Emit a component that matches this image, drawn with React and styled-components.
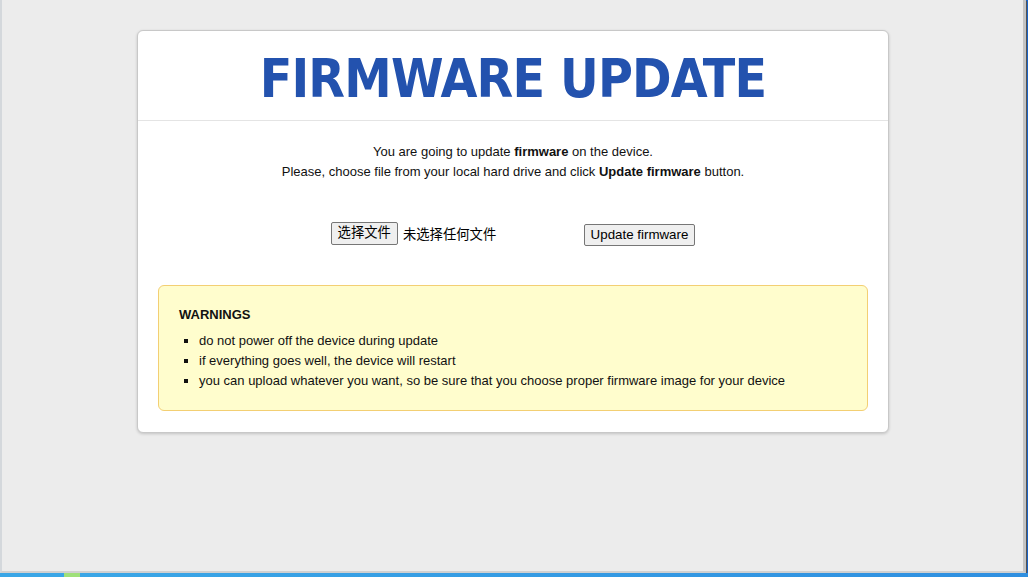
import React from "react";
import styled, { createGlobalStyle } from "styled-components";

const Global = createGlobalStyle`
  html, body { margin: 0; padding: 0; }
  body { font-family: "Liberation Sans", Arial, sans-serif; background: #1b63c4; }
  * { box-sizing: border-box; }
`;

const Screen = styled.div`
  width: 1028px;
  height: 577px;
  display: flex;
  flex-direction: column;
  overflow: hidden;
  background: #1b63c4;
`;

const WindowRow = styled.div`
  flex: 1;
  display: flex;
  min-height: 0;
`;

const Page = styled.div`
  flex: 1;
  background: #ececec;
  border-left: 2px solid #d4d8dc;
  border-right: 3px solid #c4c4c4;
  border-bottom: 2px solid #d0d0d0;
  box-shadow: 1px 1px 0 #555;
  padding-top: 30px;
  margin-right: 2px;
`;

const Taskbar = styled.div`
  height: 4px;
  background: linear-gradient(90deg, #3aa6e6 0px, #3aa6e6 64px, #9fe07a 64px, #9fe07a 80px, #3aa6e6 80px, #2f8fe0 100%);
`;

const Card = styled.div`
  width: 752px;
  margin: 0 auto 0 135px;
  background: #fff;
  border: 1px solid #c8c8c8;
  border-radius: 6px;
  box-shadow: 0 1px 3px rgba(0, 0, 0, 0.18);
  padding-bottom: 21px;
`;

const Header = styled.div`
  height: 90px;
  border-bottom: 1px solid #e4e4e4;
  display: flex;
  align-items: center;
  justify-content: center;
`;

const Title = styled.h1`
  margin: 0;
  font-family: "DejaVu Sans Condensed", "DejaVu Sans", Verdana, sans-serif;
  font-stretch: condensed;
  font-weight: bold;
  font-size: 53px;
  letter-spacing: -0.8px;
  color: #2352ae;
  padding-top: 5px;
`;

const Intro = styled.div`
  padding-top: 21px;
  text-align: center;
  font-size: 13px;
  line-height: 20px;
  color: #111;
`;

const Line = styled.p`
  margin: 0;
`;

const Form = styled.div`
  display: flex;
  justify-content: center;
  align-items: center;
  gap: 4px;
  margin-top: 40px;
  height: 24px;
`;

const FileWidget = styled.div`
  width: 249px;
  display: flex;
  align-items: center;
  gap: 5px;
  font-size: 13.333px;
  color: #000;
  font-family: "Liberation Sans", "Noto Sans CJK SC", sans-serif;
`;

const FileName = styled.span`
  margin-top: -1px;
`;

const NativeButton = styled.button`
  font-family: "Liberation Sans", "Noto Sans CJK SC", sans-serif;
  font-size: 13.333px;
  color: #000;
  background: #efefef;
  border: 1px solid #767676;
  border-radius: 2px;
  padding: 1px 6px;
  height: ${(p) => p.$h || 22}px;
  margin-top: ${(p) => p.$mt || 0}px;
  line-height: 16px;
`;

const Warning = styled.div`
  margin: 39px 20px 0 20px;
  background: #fffdcd;
  border: 1px solid #f3cf73;
  border-radius: 6px;
  padding: 20px 20px 19px 20px;
  font-size: 13px;
  color: #111;
`;

const WarnTitle = styled.div`
  font-weight: bold;
  line-height: 18px;
`;

const List = styled.ul`
  margin: 7px 0 0 0;
  padding-left: 20px;
  list-style: square;
  line-height: 20px;
`;

export default function App() {
  return (
    <>
      <Global />
      <Screen>
        <WindowRow>
          <Page>
            <Card>
              <Header>
                <Title>FIRMWARE UPDATE</Title>
              </Header>
              <Intro>
                <Line>
                  You are going to update <b>firmware</b> on the device.
                </Line>
                <Line>
                  Please, choose file from your local hard drive and click <b>Update firmware</b> button.
                </Line>
              </Intro>
              <Form>
                <FileWidget>
                  <NativeButton $h={23} $mt={-2}>选择文件</NativeButton>
                  <FileName>未选择任何文件</FileName>
                </FileWidget>
                <NativeButton $mt={2}>Update firmware</NativeButton>
              </Form>
              <Warning>
                <WarnTitle>WARNINGS</WarnTitle>
                <List>
                  <li>do not power off the device during update</li>
                  <li>if everything goes well, the device will restart</li>
                  <li>you can upload whatever you want, so be sure that you choose proper firmware image for your device</li>
                </List>
              </Warning>
            </Card>
          </Page>
        </WindowRow>
        <Taskbar />
      </Screen>
    </>
  );
}
